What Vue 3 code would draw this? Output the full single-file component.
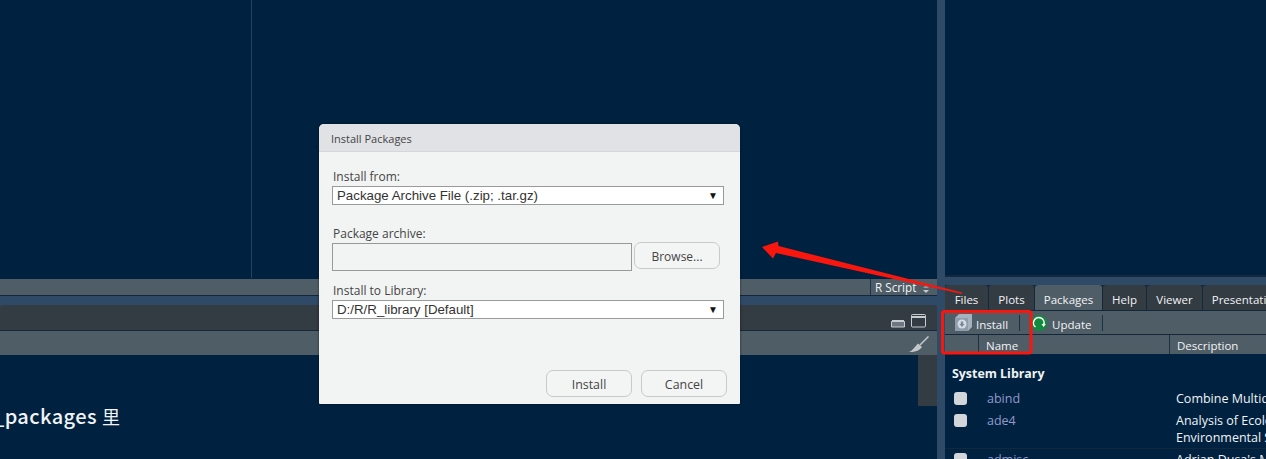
<script setup>
const tabs = [
  { label: 'Files', w: 43 },
  { label: 'Plots', w: 45 },
  { label: 'Packages', w: 67, active: true },
  { label: 'Help', w: 43 },
  { label: 'Viewer', w: 55 },
  { label: 'Presentation', w: 86 }
]
</script>

<template>
  <div class="app">
    <div class="left">
      <div class="editor"><div class="margin"></div></div>
      <div class="status">
        <div class="type">
          <span>R Script</span>
          <svg width="10" height="10" viewBox="0 0 10 10"><path d="M2 4 5 1l3 3z" fill="#8f979e"/><path d="M2 6h6L5 9z" fill="#c5c9cc"/></svg>
        </div>
      </div>
      <div class="console-tabs">
        <svg width="36" height="15" viewBox="0 0 36 15" fill="none">
          <path d="M1.500 8.500h13v5.500h-13z" fill="#6d7781" stroke="#c7ccd0"/>
          <path d="M2 7h12v2H2z" fill="#c7ccd0"/>
          <rect x="21.500" y="1.500" width="14" height="12.500" rx="1" stroke="#c7ccd0"/>
          <path d="M22 3h13v2H22z" fill="#c7ccd0"/>
        </svg>
      </div>
      <div class="console-tools">
        <svg width="22" height="17" viewBox="0 0 22 17"><path d="M20.500 0.500 12 9" stroke="#c4c8cb" stroke-width="1.500"/><path d="M10 7.500 14 11c-2 3-6 5-13 5 3-1 5-4 9-8.500z" fill="#c4c8cb"/></svg>
      </div>
      <div class="console">
        <p class="line">_packages<span class="han">里</span></p>
        <div class="scroll"></div>
      </div>
    </div>

    <div class="right">
      <div class="top-pane"></div>
      <div class="pkg">
        <div class="tabs">
          <div v-for="t in tabs" :key="t.label" class="tab" :class="{ active: t.active }" :style="{ width: t.w + 'px' }">{{ t.label }}</div>
        </div>
        <div class="pkg-tools">
          <svg class="box-icon" width="19" height="19" viewBox="0 0 19 19">
            <path d="M5 1h13v13l-4 4H1V5z" fill="#a5b2bf"/>
            <path d="M1 5h13v13H1z" fill="#8e9cab"/>
            <circle cx="8" cy="11" r="4.500" fill="#d6dce1"/>
            <path d="M6.800 8.500h2.400v2.500h1.500L8 14 5.300 11h1.500z" fill="#77889a"/>
          </svg>
          <span class="tool-text install">Install</span>
          <i class="sep first"></i>
          <svg class="up-icon" width="16" height="16" viewBox="0 0 16 16">
            <circle cx="8" cy="8" r="8" fill="#108a3c"/>
            <path d="M4.500 12A5.300 5.300 0 1 1 12.800 9.500" fill="none" stroke="#fff" stroke-width="1.500"/>
            <path d="M10.500 9h4.300L12.600 12z" fill="#fff"/>
          </svg>
          <span class="tool-text">Update</span>
          <i class="sep second"></i>
        </div>
        <div class="thead">
          <div class="th check"></div>
          <div class="th">Name</div>
          <div class="th">Description</div>
        </div>
        <div class="tbody">
          <h4>System Library</h4>
          <div class="row one"><i class="box"></i><a>abind</a><span>Combine Multidimensional Arrays</span></div>
          <div class="row two"><i class="box"></i><a>ade4</a><span>Analysis of Ecological Data: Exploratory and Euclidean Methods in<br>Environmental Sciences</span></div>
          <div class="row"><i class="box"></i><a>admisc</a><span>Adrian Dusa's Miscellaneous</span></div>
        </div>
      </div>
    </div>

    <section class="dialog">
      <header>Install Packages</header>
      <div class="form">
        <label>Install from:</label>
        <div class="select"><span>Package Archive File (.zip; .tar.gz)</span><b>▼</b></div>
        <label class="archive">Package archive:</label>
        <div class="file">
          <div class="path"></div>
          <button class="browse">Browse...</button>
        </div>
        <label class="lib">Install to Library:</label>
        <div class="select"><span>D:/R/R_library [Default]</span><b>▼</b></div>
        <div class="actions">
          <button>Install</button>
          <button>Cancel</button>
        </div>
      </div>
    </section>

    <svg class="marks" width="1266" height="459" viewBox="0 0 1266 459" fill="none">
      <path d="M762 247 778 241.500 778.500 246 962 292.500 962 294 776 253 773 258.500z" fill="#f8170f"/>
      <rect x="942.500" y="311.500" width="88.500" height="41.500" rx="2" stroke="#f8170f" stroke-width="3"/>
    </svg>
  </div>
</template>

<style>
html, body { margin: 0; overflow: hidden; background: #002240; }
</style>

<style scoped>
.app {
  position: relative;
  width: 1266px;
  height: 459px;
  overflow: hidden;
  display: flex;
  gap: 8px;
  background: #2f4a66;
  font-family: "Open Sans", sans-serif;
  font-size: 11.500px;
  color: #f1f3f4;
}
.left { width: 937px; display: flex; flex-direction: column; }
.right { flex: 1; display: flex; flex-direction: column; min-width: 0; }

.editor { height: 279px; background: #002240; flex: none; display: flex; }
.margin { width: 251px; height: 278px; border-right: 1px solid #27425f; }

.status {
  height: 16px;
  flex: none;
  display: flex;
  justify-content: flex-end;
  background: #4f5d67;
  border-bottom: 1px solid #14283d;
}
.type {
  width: 67px;
  box-sizing: border-box;
  border-left: 1px solid #1f3347;
  padding-left: 4px;
  display: flex;
  align-items: center;
  gap: 5px;
  font-size: 11.700px;
}
.type svg { margin-top: 3px; }
.console-tabs {
  margin-top: 9px;
  height: 26px;
  flex: none;
  box-sizing: border-box;
  background: #333b43;
  border-radius: 3px 3px 0 0;
  border-bottom: 1px solid #14283d;
  display: flex;
  justify-content: flex-end;
  align-items: flex-start;
  padding: 8px 11px 0 0;
}
.console-tools {
  height: 24px;
  flex: none;
  box-sizing: border-box;
  background: #4f5d67;
  display: flex;
  justify-content: flex-end;
  align-items: flex-start;
  padding: 5px 7px 0 0;
}
.console { flex: 1; background: #002240; position: relative; }
.line {
  margin: 0;
  padding-top: 49px;
  text-indent: -7px;
  font-family: "Noto Sans CJK SC", sans-serif;
  font-size: 20px;
  font-weight: 500;
  line-height: 24px;
  letter-spacing: 0.400px;
}
.han { font-size: 18px; font-weight: 400; margin-left: 5px; }
.scroll {
  position: absolute;
  top: 0;
  right: 0;
  width: 19px;
  height: 51px;
  background: #333b43;
}

.top-pane {
  height: 277px;
  flex: none;
  box-sizing: border-box;
  background: #002240;
  border-bottom: 2px solid #14283d;
}
.pkg { margin-top: 8px; flex: 1; display: flex; flex-direction: column; min-height: 0; }
.tabs { height: 26px; flex: none; display: flex; gap: 1px; background: #14283d; border-bottom: 1px solid #14283d; box-sizing: border-box; overflow: hidden; }
.tab {
  flex: none;
  box-sizing: border-box;
  background: #333b43;
  border-radius: 3px 3px 0 0;
  text-align: center;
  padding-top: 6px;
  line-height: 17px;
  white-space: nowrap;
}
.tab.active { background: #4f5d67; height: 27px; }
.pkg-tools {
  height: 24px;
  flex: none;
  box-sizing: border-box;
  background: #4f5d67;
  border-bottom: 1px solid #14283d;
  display: flex;
  align-items: center;
  padding-left: 9px;
}
.tool-text { line-height: 19px; padding-top: 4px; }
.install { margin-left: 3px; }
.sep { width: 1px; height: 16px; background: #1d3145; flex: none; }
.sep.first { margin: 0 11px; }
.sep.second { margin-left: 11px; }
.up-icon { margin-right: 5px; }
.thead { height: 19px; flex: none; display: grid; grid-template-columns: 34px 191px 1fr; background: #4f5d67; }
.th { padding: 1px 0 0 7px; line-height: 19px; border-right: 1px solid #1d3145; }
.th:last-child { border-right: 0; }
.th.check { padding: 0; }
.tbody { background: #002240; flex: 1; }
h4 { margin: 0; padding: 11px 0 0 7px; font-size: 12.400px; line-height: 18px; font-weight: 700; }
.row {
  display: grid;
  grid-template-columns: 34px 197px 1fr;
  align-items: start;
  line-height: 17px;
  white-space: nowrap;
  font-size: 12.500px;
}
.row.one { margin-top: 7px; height: 22px; }
.row.two { height: 36px; border-bottom: 1px solid #14283d; }
.row a { color: #9398cc; padding-left: 8px; }
.box { display: block; width: 13px; height: 13px; margin: 2px 0 0 9px; border-radius: 3px; background: #d2d6da; }
.row.two + .row { margin-top: 2px; }

.dialog {
  position: absolute;
  left: 319px;
  top: 124px;
  width: 421px;
  height: 280px;
  border-radius: 5px 5px 1px 1px;
  background: #f2f4f3;
  box-shadow: 0 0 3px rgba(0, 0, 0, 0.5);
  color: #444;
  overflow: hidden;
}
header {
  height: 28px;
  box-sizing: border-box;
  background: #e1e2e6;
  border-bottom: 1px solid #d5d6da;
  padding-left: 12px;
  line-height: 29px;
  font-size: 11px;
}
.form { padding: 16px 16px 0 13px; }
label { display: block; line-height: 17px; font-size: 12px; padding-left: 1px; }
.select {
  width: 392px;
  height: 19px;
  box-sizing: border-box;
  margin-top: 1px;
  padding: 0 5px 0 4px;
  display: flex;
  justify-content: space-between;
  border: 1px solid #9a9a9a;
  background: #fff;
  font-family: "Liberation Sans", sans-serif;
  font-size: 13.300px;
  line-height: 17px;
  color: #333;
}
.select b { font-weight: 400; font-size: 10px; color: #111; }
.archive { margin-top: 20px; }
.file { display: flex; gap: 2px; margin-top: 1px; }
.path { width: 298px; height: 26px; border: 1px solid #999; background: #f2f4f3; }
button {
  font: 12.400px "Open Sans", sans-serif;
  color: #444;
  background: #f3f5f4;
  border: 1px solid #c8c9ca;
  border-radius: 7px;
  height: 27px;
  width: 86px;
  padding: 2px 0 0;
}
.browse { margin-top: -1px; font-size: 12px; }
.lib { margin-top: 11px; }
.actions { display: flex; justify-content: flex-end; gap: 9px; margin: 51px -3px 0 0; }
.marks { position: absolute; left: 0; top: 0; pointer-events: none; }
</style>
